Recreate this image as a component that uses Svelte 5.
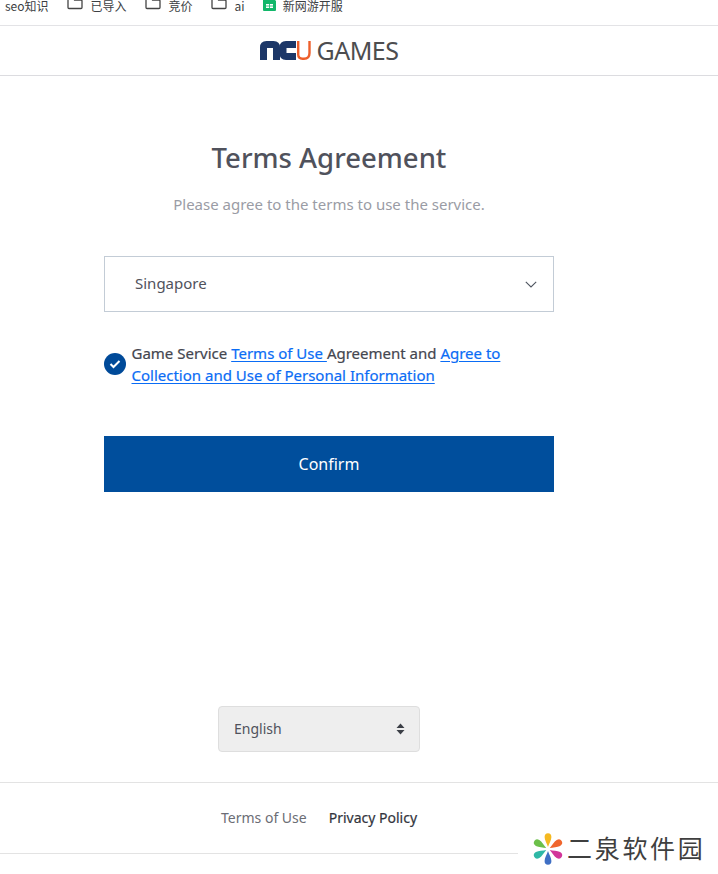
<script lang="ts">
  type Bookmark = { label: string; kind: 'plain' | 'folder' | 'sheet' };

  const bookmarks: Bookmark[] = [
    { label: 'seo知识', kind: 'plain' },
    { label: '已导入', kind: 'folder' },
    { label: '竞价', kind: 'folder' },
    { label: 'ai', kind: 'folder' },
    { label: '新网游开服', kind: 'sheet' }
  ];

  const petals = [
    { angle: 0, color: '#f5b921' },
    { angle: 60, color: '#f0662d' },
    { angle: 120, color: '#d2359a' },
    { angle: 180, color: '#3f6fc4' },
    { angle: 240, color: '#2fb8a6' },
    { angle: 300, color: '#6cc04a' }
  ];
</script>

<div class="page">
  <nav class="bookmarks">
    {#each bookmarks as b}
      <span class="bookmark">
        {#if b.kind === 'folder'}
          <svg class="folder" width="16" height="13" viewBox="0 0 16 13" fill="none">
            <path d="M1 1.500V10.500Q1 11.500 2 11.500H14Q15 11.500 15 10.500V4Q15 3 14 3H7.500L6 0.800H2Q1 0.800 1 1.500Z" stroke="#444" stroke-width="1.300" />
          </svg>
        {:else if b.kind === 'sheet'}
          <svg class="sheet" width="13" height="14" viewBox="0 0 13 14">
            <path d="M1 0H9L13 4V13Q13 14 12 14H1Q0 14 0 13V1Q0 0 1 0Z" fill="#12b76a" />
            <rect x="3" y="7" width="7" height="4" fill="#fff" />
            <path d="M3 9H10M6.500 7V11" stroke="#12b76a" stroke-width="0.800" />
          </svg>
        {/if}
        {b.label}
      </span>
    {/each}
  </nav>

  <header class="site-header">
    <div class="logo">
      <svg width="51" height="19" viewBox="0 0 51 19" fill="none">
        <path d="M3.500 19V6.500Q3.500 3.500 6.500 3.500H13.500Q16.500 3.500 16.500 6.500V19" stroke="#1c3768" stroke-width="7" />
        <path d="M36 3.500H26Q23 3.500 23 6.500V12.500Q23 15.500 26 15.500H36" stroke="#1c3768" stroke-width="7" />
        <path d="M38.200 0V13.500Q38.200 17.700 42.500 17.700H44Q49.500 17.700 49.500 12V0" stroke="#ee5f2b" stroke-width="2.400" />
      </svg>
      <span class="logo-text">GAMES</span>
    </div>
  </header>

  <main class="content">
    <h1>Terms Agreement</h1>
    <p class="subtitle">Please agree to the terms to use the service.</p>

    <div class="region-select">
      <span>Singapore</span>
      <svg width="12" height="7" viewBox="0 0 12 7" fill="none">
        <path d="M0.800 0.800L6 6L11.200 0.800" stroke="#4f5560" stroke-width="1.100" />
      </svg>
    </div>

    <div class="agree">
      <span class="check">
        <svg width="12" height="10" viewBox="0 0 12 10" fill="none">
          <path d="M1.500 5L4.500 8L10.500 2" stroke="#fff" stroke-width="2" />
        </svg>
      </span>
      <p>Game Service <a href="#terms">{'Terms of Use '}</a>Agreement and <a href="#privacy">Agree to Collection and Use of Personal Information</a></p>
    </div>

    <button class="confirm">Confirm</button>
  </main>

  <div class="lang-wrap">
    <div class="lang-select">
      <span>English</span>
      <svg width="9" height="12" viewBox="0 0 9 12">
        <path d="M4.500 0.500L8.500 5H0.500Z M4.500 11.500L0.500 7H8.500Z" fill="#3b3f46" />
      </svg>
    </div>
  </div>

  <footer class="site-footer">
    <a href="#terms">Terms of Use</a>
    <a href="#privacy" class="strong">Privacy Policy</a>
  </footer>

  <div class="watermark">
    <svg width="32" height="34" viewBox="-16 -17 32 34">
      {#each petals as p}
        <path d="M0 -2C-1 -5 -3.400 -9 -3.400 -12A3.400 3.800 0 0 1 3.400 -12C3.400 -9 1 -5 0 -2Z" fill={p.color} transform={`rotate(${p.angle})`} />
      {/each}
    </svg>
    <span class="watermark-text">二泉软件园</span>
  </div>
</div>

<style>
  :global(body) {
    background: #fff;
    font-family: 'Noto Sans', 'Noto Sans CJK SC', sans-serif;
  }

  .page {
    position: relative;
    width: 718px;
    height: 874px;
    overflow: hidden;
    background: #fff;
    display: flex;
    flex-direction: column;
  }

  .bookmarks {
    height: 26px;
    flex: none;
    box-sizing: border-box;
    border-bottom: 1px solid #e3e3e6;
    display: flex;
    align-items: flex-start;
    padding-left: 5px;
    font-family: 'Noto Sans CJK SC', 'Noto Sans', sans-serif;
    font-size: 12px;
    line-height: 12px;
    color: #3c4043;
  }

  .bookmark {
    display: flex;
    align-items: center;
    height: 12px;
    margin-right: 18px;
    white-space: nowrap;
  }

  .folder {
    margin: -6px 8px 0 0;
  }

  .sheet {
    margin: -4px 7px 0 0;
  }

  .site-header {
    height: 50px;
    flex: none;
    box-sizing: border-box;
    border-bottom: 1px solid #dcdce0;
  }

  .logo {
    width: 658px;
    height: 100%;
    display: flex;
    justify-content: center;
    align-items: center;
    gap: 6px;
  }

  .logo-text {
    font-size: 25px;
    line-height: 24px;
    letter-spacing: -0.500px;
    margin-bottom: 2px;
    color: #4d4d4f;
  }

  .content {
    width: 450px;
    margin-left: 104px;
    display: flex;
    flex-direction: column;
    align-items: center;
  }

  h1 {
    margin: 62px 0 0;
    font-size: 27.500px;
    line-height: 40px;
    font-weight: 500;
    color: #50525c;
    white-space: nowrap;
  }

  .subtitle {
    margin: 15px 0 0;
    font-size: 15px;
    line-height: 22px;
    color: #9a9ca5;
    white-space: nowrap;
  }

  .region-select {
    margin-top: 41px;
    width: 100%;
    height: 56px;
    box-sizing: border-box;
    border: 1px solid #c3ccd6;
    display: flex;
    align-items: center;
    justify-content: space-between;
    padding: 0 16px 0 30px;
    font-size: 15px;
    color: #50525c;
  }

  .region-select span {
    margin-bottom: 2px;
  }

  .agree {
    margin-top: 30px;
    width: 100%;
    display: flex;
    align-items: center;
    gap: 5.500px;
  }

  .agree p {
    margin: 0;
    font-size: 15px;
    line-height: 22px;
    color: #44464f;
    -webkit-text-stroke: 0.200px currentColor;
  }

  .agree a {
    color: #0a6cf5;
    text-decoration: underline;
    text-underline-offset: 2px;
  }

  .check {
    flex: none;
    width: 22px;
    height: 22px;
    border-radius: 50%;
    background: #004a99;
    display: flex;
    align-items: center;
    justify-content: center;
  }

  .confirm {
    margin-top: 50px;
    width: 100%;
    height: 56px;
    border: 0;
    background: #004e9c;
    color: #fff;
    font-family: inherit;
    font-size: 16px;
  }

  .lang-wrap {
    margin-top: 214px;
    margin-left: 218px;
  }

  .lang-select {
    width: 202px;
    height: 46px;
    box-sizing: border-box;
    background: #eeeeee;
    border: 1px solid #dedede;
    border-radius: 4px;
    display: flex;
    align-items: center;
    justify-content: space-between;
    padding: 0 14px 0 15px;
    font-size: 14px;
    color: #50525c;
  }

  .lang-select span {
    margin-bottom: 2px;
  }

  .site-footer {
    margin-top: 30px;
    height: 72px;
    box-sizing: border-box;
    border-top: 1px solid #e3e3e3;
    border-bottom: 1px solid #e3e3e3;
    padding: 0 0 2px 221px;
    display: flex;
    align-items: center;
    gap: 22px;
    font-size: 14px;
  }

  .site-footer a {
    color: #6b6d75;
    text-decoration: none;
  }

  .site-footer a.strong {
    color: #33353d;
    -webkit-text-stroke: 0.200px currentColor;
  }

  .watermark {
    position: absolute;
    right: 0;
    bottom: 0;
    width: 200px;
    height: 50px;
    background: #fff;
    display: flex;
    align-items: center;
    gap: 3px;
    padding-left: 14px;
    box-sizing: border-box;
    font-family: 'Noto Sans CJK SC', sans-serif;
    font-size: 25px;
    letter-spacing: 2.700px;
    color: #3f3f3f;
    white-space: nowrap;
  }

  .watermark-text {
    margin-bottom: 4px;
  }
</style>
